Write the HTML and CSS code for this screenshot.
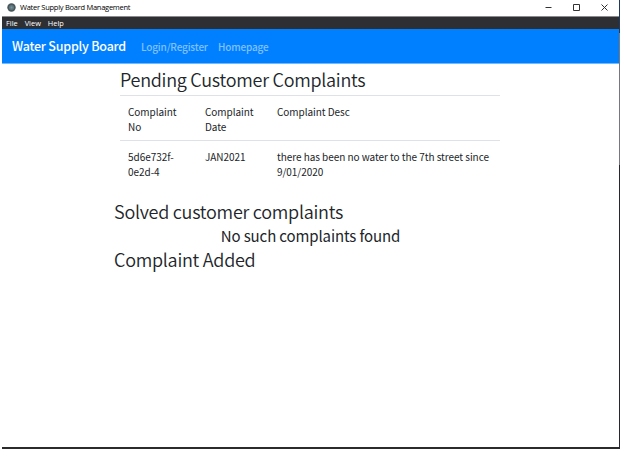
FILE: index.html
```html
<!DOCTYPE html>
<html lang="en">
<head>
<meta charset="utf-8">
<title>Water Supply Board Management</title>
<link rel="stylesheet" href="styles.css">
</head>
<body>
<div class="window">
  <header class="titlebar">
    <svg class="app-icon" viewBox="0 0 9 9"><circle cx="4.5" cy="4.5" r="4.2" fill="#49565b"/><circle cx="4.5" cy="4.5" r="2.5" fill="#607a80"/><circle cx="4.5" cy="4.5" r="1" fill="#789298"/></svg>
    <span class="app-title">Water Supply Board Management</span>
    <div class="controls">
      <svg viewBox="0 0 7 7"><path d="M0.5 3.5H6.5"/></svg>
      <svg viewBox="0 0 7 7"><path d="M0.5 0.5H6.5V6.5H0.5Z"/></svg>
      <svg viewBox="0 0 7 7"><path d="M0.5 0.5L6.5 6.5M6.5 0.5L0.5 6.5"/></svg>
    </div>
  </header>
  <div class="menubar"><span>File</span><span>View</span><span>Help</span></div>
  <nav class="navbar">
    <span class="brand">Water Supply Board</span>
    <span class="link login">Login/Register</span>
    <span class="link home">Homepage</span>
  </nav>
  <main class="content">
    <section class="pending">
      <h2 class="pending-title">Pending Customer Complaints</h2>
      <table class="complaints">
        <colgroup><col class="col-no"><col class="col-date"><col></colgroup>
        <tr><td>Complaint<br>No</td><td>Complaint<br>Date</td><td>Complaint Desc</td></tr>
        <tr><td>5d6e732f-<br>0e2d-4</td><td>JAN2021</td><td class="desc">there has been no water to the 7th street since<br>9/01/2020</td></tr>
      </table>
    </section>
    <h2 class="solved-title">Solved customer complaints</h2>
    <p class="empty">No such complaints found</p>
    <h2 class="added-title">Complaint Added</h2>
  </main>
</div>
</body>
</html>
```
FILE: styles.css
```css
* { box-sizing: border-box; }
body {
  margin: 0;
  background: #fff;
  color: #212529;
  font-family: "Noto Sans CJK SC", "Open Sans", sans-serif;
  overflow: hidden;
}
.window {
  width: 620px;
  height: 449px;
  padding: 0 1px 0 2px;
  background: linear-gradient(#1e3a5f 0 33px, #77787a 33px 165px, #27282b 165px) right / 1px 100% no-repeat;
  display: flex;
  flex-direction: column;
}
.titlebar {
  height: 16px;
  display: flex;
  align-items: center;
  padding: 0 11px 2px 5px;
}
.app-icon { width: 9px; height: 9px; }
.app-title {
  margin-left: 4px;
  font: 7.5px/14px "Open Sans", sans-serif;
  letter-spacing: -0.27px;
  color: #000;
  white-space: nowrap;
}
.controls { margin-left: auto; display: flex; gap: 21px; }
.controls svg { width: 7px; height: 7px; fill: none; stroke: #333; stroke-width: 1; }
.menubar {
  height: 13px;
  border-top: 1px solid #8b8b8e;
  background: #2e2f33;
  color: #fff;
  display: flex;
  gap: 7px;
  padding-left: 4px;
  font: 7.4px/12px "Open Sans", sans-serif;
}
.navbar {
  height: 35px;
  background: #0080ff;
  border-bottom: 1px solid #70b8ff;
  display: flex;
  align-items: center;
  padding-left: 10px;
  white-space: nowrap;
}
.brand { color: #fff; font-size: 12.5px; letter-spacing: -0.22px; font-weight: 500; line-height: 36px; width: 129px; }
.link { color: #80c0ff; font-size: 10px; letter-spacing: -0.17px; font-weight: 500; line-height: 34px; padding-top: 2px; }
.login { width: 77px; }
.content {
  flex: 1;
  padding-left: 112px;
  border-bottom: 2px solid #2b2b2b;
  border-image: linear-gradient(#8d8d8d 50%, #2b2b2b 50%) 2;
  border-width: 0 0 2px;
}
h2, p { margin: 0; font-weight: 400; white-space: nowrap; }
h2 { font-size: 18px; font-weight: 350; letter-spacing: -0.26px; line-height: 24px; }
.pending { margin-left: 4px; width: 382px; padding: 4px 0 0 2px; }
.pending-title { height: 27px; line-height: 23px; }
.complaints {
  width: 380px;
  table-layout: fixed;
  border-collapse: separate;
  border-spacing: 0;
  font-size: 10px;
  letter-spacing: -0.05px;
  line-height: 15px;
}
.col-no { width: 77px; }
.col-date { width: 72px; }
.complaints td {
  height: 45px;
  padding: 8px 0 6px 8px;
  border-top: 1px solid #dee2e6;
  vertical-align: top;
  white-space: nowrap;
}
.solved-title { margin-top: 14px; }
.empty { height: 24px; width: 393px; text-align: center; font-size: 15px; letter-spacing: -0.12px; line-height: 26px; }
```
